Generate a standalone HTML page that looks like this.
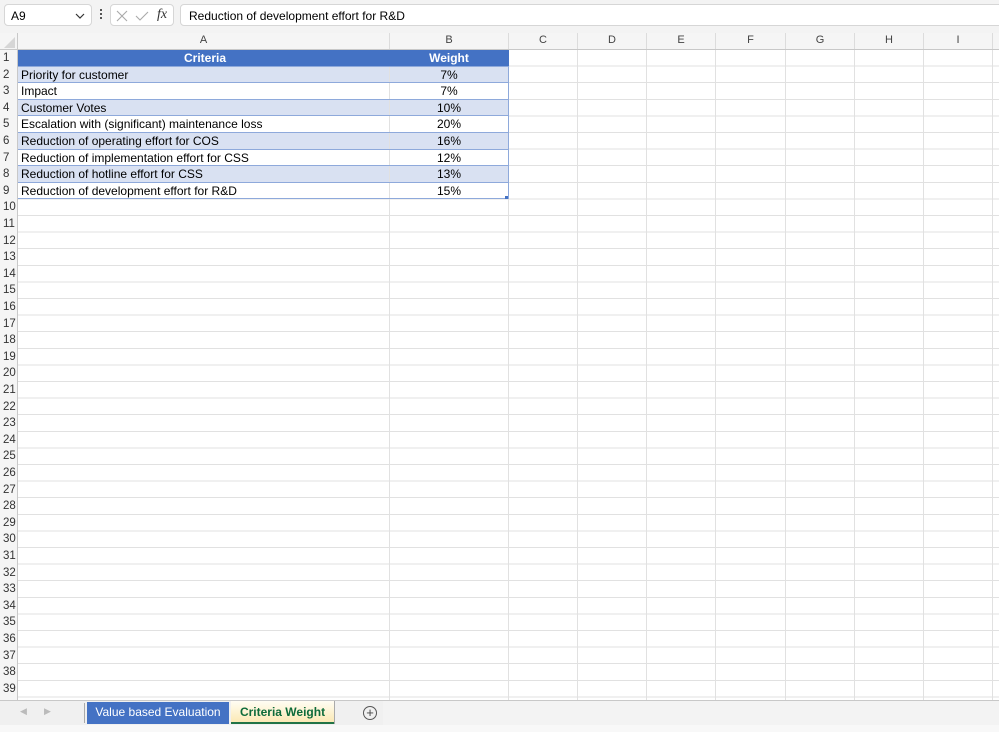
<!DOCTYPE html>
<html><head><meta charset="utf-8"><style>
*{box-sizing:border-box;margin:0;padding:0}
body{width:999px;height:732px;overflow:hidden;background:#fff;font-family:"Liberation Sans",sans-serif;font-size:12px;color:#000;position:relative}
.abs{position:absolute}
#top{left:0;top:0;width:999px;height:33px;background:#f3f3f3}
.box{position:absolute;background:#fff;border:1px solid #d6d6d6;border-radius:4px}
#colh{left:0;top:33px;width:999px;height:17px;background:#f5f5f5;border-bottom:1px solid #c8c8c8}
.ch{position:absolute;top:0;height:16px;line-height:15px;text-align:center;font-size:11px;color:#444;border-right:1px solid #dcdcdc}
#rowh{left:0;top:50px;width:18px;height:650px;background:#f5f5f5;border-right:1px solid #c8c8c8}
.rn{position:absolute;left:0;width:17px;height:16.6px;line-height:16px;font-size:11.5px;color:#333;padding-left:3px}
#grid{left:18px;top:50px;width:981px;height:650px;background:repeating-linear-gradient(to bottom,transparent 0,transparent 15.6px,#e1e1e1 15.6px,#e1e1e1 16.6px)}
.vl{position:absolute;top:50px;height:650px;width:1px;background:#e1e1e1}
.r{position:absolute;left:18px;width:491px;height:16.6px;line-height:16px;border-bottom:1px solid #8ea9db}
.r .a{position:absolute;left:0;width:372px;height:100%;padding-left:3px;border-right:1px solid #e1e1e1}
.r .b{position:absolute;left:372px;width:119px;height:100%;text-align:center;border-right:1px solid #8ea9db}
.alt{background:#d9e1f2}
.wh{background:#fff}
#tabs{left:0;top:700px;width:999px;height:25px;background:#f0f0f0;border-top:1px solid #c8c8c8}
#bot{left:0;top:725px;width:999px;height:7px;background:#f8f8f8}
</style></head><body>
<div id="top" class="abs">
 <div class="box" style="left:4px;top:4px;width:88px;height:22px;"><span style="position:absolute;left:6px;top:4px;font-size:12px">A9</span>
  <svg style="position:absolute;left:70px;top:8px" width="10" height="7"><path d="M1 1 L5 5 L9 1" fill="none" stroke="#333" stroke-width="1.2"/></svg></div>
 <div class="abs" style="left:100px;top:9px;width:2px;height:2px;background:#555;box-shadow:0 4px 0 #555,0 8px 0 #555"></div>
 <div class="box" style="left:110px;top:4px;width:64px;height:22px;">
  <svg style="position:absolute;left:5px;top:5px" width="12" height="12"><path d="M1 1L11 11M11 1L1 11" stroke="#aaa" stroke-width="1.1"/></svg>
  <svg style="position:absolute;left:24px;top:5px" width="14" height="12"><path d="M1 6L5 10L13 2" fill="none" stroke="#aaa" stroke-width="1.1"/></svg>
  <span style="position:absolute;left:46px;top:2px;font-family:'Liberation Serif',serif;font-style:italic;font-size:14px;color:#333">fx</span></div>
 <div class="box" style="left:180px;top:4px;width:825px;height:22px;"><span style="position:absolute;left:8px;top:4px">Reduction of development effort for R&amp;D</span></div>
</div>
<div id="colh" class="abs">
 <div class="ch" style="left:0;width:18px;border-right:1px solid #c8c8c8"><svg width="16" height="14" style="position:absolute;left:1px;top:2px"><path d="M14 2 L14 13 L3 13 Z" fill="#d6d6d6"/></svg></div>
 <div class="ch" style="left:18px;width:372px">A</div>
 <div class="ch" style="left:390px;width:119px">B</div>
 <div class="ch" style="left:509px;width:69px">C</div>
 <div class="ch" style="left:578px;width:69px">D</div>
 <div class="ch" style="left:647px;width:69px">E</div>
 <div class="ch" style="left:716px;width:70px">F</div>
 <div class="ch" style="left:786px;width:69px">G</div>
 <div class="ch" style="left:855px;width:69px">H</div>
 <div class="ch" style="left:924px;width:69px">I</div>
</div>
<div id="grid" class="abs"></div>
<div class="vl" style="left:389px"></div><div class="vl" style="left:508px"></div><div class="vl" style="left:577px"></div><div class="vl" style="left:646px"></div><div class="vl" style="left:715px"></div><div class="vl" style="left:785px"></div><div class="vl" style="left:854px"></div><div class="vl" style="left:923px"></div><div class="vl" style="left:992px"></div>
<div id="rowh" class="abs">
<div class="rn" style="top:0px">1</div><div class="rn" style="top:16.6px">2</div><div class="rn" style="top:33.2px">3</div><div class="rn" style="top:49.8px">4</div><div class="rn" style="top:66.4px">5</div><div class="rn" style="top:83px">6</div><div class="rn" style="top:99.6px">7</div><div class="rn" style="top:116.2px">8</div><div class="rn" style="top:132.8px">9</div><div class="rn" style="top:149.4px">10</div><div class="rn" style="top:166px">11</div><div class="rn" style="top:182.6px">12</div><div class="rn" style="top:199.2px">13</div><div class="rn" style="top:215.8px">14</div><div class="rn" style="top:232.4px">15</div><div class="rn" style="top:249px">16</div><div class="rn" style="top:265.6px">17</div><div class="rn" style="top:282.2px">18</div><div class="rn" style="top:298.8px">19</div><div class="rn" style="top:315.4px">20</div><div class="rn" style="top:332px">21</div><div class="rn" style="top:348.6px">22</div><div class="rn" style="top:365.2px">23</div><div class="rn" style="top:381.8px">24</div><div class="rn" style="top:398.4px">25</div><div class="rn" style="top:415px">26</div><div class="rn" style="top:431.6px">27</div><div class="rn" style="top:448.2px">28</div><div class="rn" style="top:464.8px">29</div><div class="rn" style="top:481.4px">30</div><div class="rn" style="top:498px">31</div><div class="rn" style="top:514.6px">32</div><div class="rn" style="top:531.2px">33</div><div class="rn" style="top:547.8px">34</div><div class="rn" style="top:564.4px">35</div><div class="rn" style="top:581px">36</div><div class="rn" style="top:597.6px">37</div><div class="rn" style="top:614.2px">38</div><div class="rn" style="top:630.8px">39</div>
</div>
<div class="r" style="top:50px;background:#4472c4;color:#fff;font-weight:bold;border-bottom:1px solid #8ea9db"><div class="a" style="text-align:center;border-right:1px solid #4472c4">Criteria</div><div class="b" style="border-right:1px solid #4472c4">Weight</div></div>
<div class="r alt" style="top:66.6px"><div class="a">Priority for customer</div><div class="b">7%</div></div>
<div class="r wh" style="top:83.2px"><div class="a">Impact</div><div class="b">7%</div></div>
<div class="r alt" style="top:99.8px"><div class="a">Customer Votes</div><div class="b">10%</div></div>
<div class="r wh" style="top:116.4px"><div class="a">Escalation with (significant) maintenance loss</div><div class="b">20%</div></div>
<div class="r alt" style="top:133px"><div class="a">Reduction of operating effort for COS</div><div class="b">16%</div></div>
<div class="r wh" style="top:149.6px"><div class="a">Reduction of implementation effort for CSS</div><div class="b">12%</div></div>
<div class="r alt" style="top:166.2px"><div class="a">Reduction of hotline effort for CSS</div><div class="b">13%</div></div>
<div class="r wh" style="top:182.8px"><div class="a">Reduction of development effort for R&amp;D</div><div class="b">15%</div></div>
<div class="abs" style="left:505px;top:196px;width:3px;height:3px;background:#4472c4"></div>
<div id="tabs" class="abs">
 <span class="abs" style="left:20px;top:5px;color:#bbb;font-size:9px">&#9664;</span>
 <span class="abs" style="left:44px;top:5px;color:#bbb;font-size:9px">&#9654;</span>
 <div class="abs" style="left:84px;top:2px;width:1px;height:20px;background:#aaa"></div>
 <div class="abs" style="left:87px;top:1px;width:142px;height:22px;background:#4472c4;color:#fff;text-align:center;line-height:21px;font-size:12px">Value based Evaluation</div>
 <div class="abs" style="left:231px;top:0;width:103px;height:23px;background:linear-gradient(#fffdf3,#fbe9b4);border-bottom:2px solid #217346;color:#0e6b3a;font-weight:bold;text-align:center;line-height:22px">Criteria Weight</div>
 <div class="abs" style="left:334px;top:0;width:1px;height:23px;background:#aaa"></div>
 <div class="abs" style="left:363px;top:5px;width:14px;height:14px;border:1px solid #555;border-radius:50%;text-align:center;line-height:11px;font-size:13px;color:#444">+</div>
 <div class="abs" style="left:383px;top:0;width:616px;height:24px;background:#f3f3f3"></div>
</div>
<div id="bot" class="abs"></div>
</body></html>
